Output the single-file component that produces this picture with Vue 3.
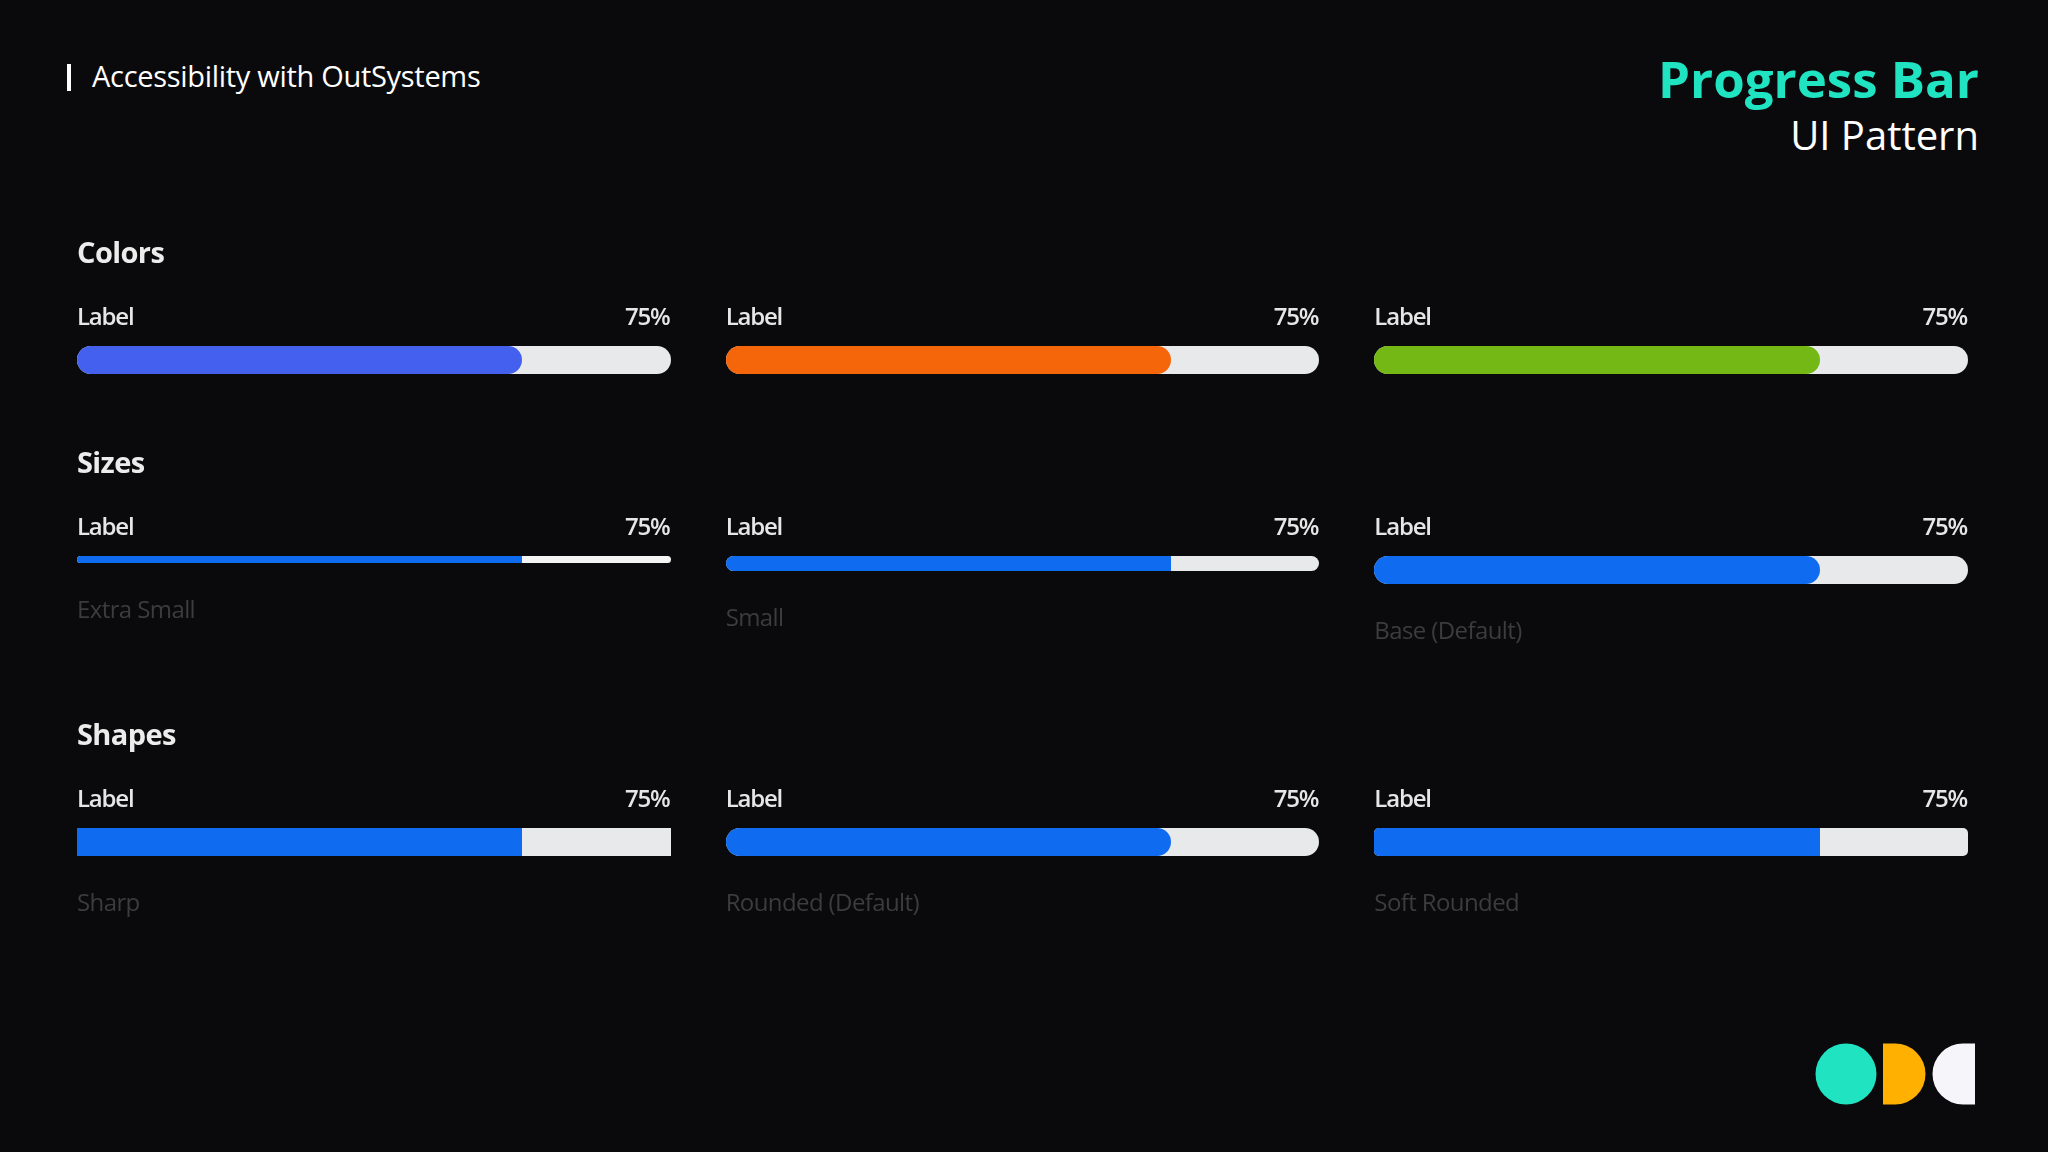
<script setup>
const colorRows = [
  { color: '#4361ee' },
  { color: '#f5650a' },
  { color: '#74b816' }
]
const blue = '#0f6cf0'

const sections = [
  { title: 'Colors', name: 'colors', items: colorRows.map((c) => ({ color: c.color, size: 'base', shape: 'rounded' })) },
  {
    title: 'Sizes',
    name: 'sizes',
    items: [
      { color: blue, size: 'xs', shape: 'rounded', caption: 'Extra Small' },
      { color: blue, size: 'sm', shape: 'rounded', caption: 'Small' },
      { color: blue, size: 'base', shape: 'rounded', caption: 'Base (Default)' }
    ]
  },
  {
    title: 'Shapes',
    name: 'shapes',
    items: [
      { color: blue, size: 'base', shape: 'sharp', caption: 'Sharp' },
      { color: blue, size: 'base', shape: 'rounded', caption: 'Rounded (Default)' },
      { color: blue, size: 'base', shape: 'soft', caption: 'Soft Rounded' }
    ]
  }
]
</script>

<template>
  <div class="page">
    <header class="top">
      <div class="crumb">
        <span class="crumb-bar"></span>
        <span>Accessibility with OutSystems</span>
      </div>
      <div class="heading">
        <div class="heading-main">Progress Bar</div>
        <div class="heading-sub">UI Pattern</div>
      </div>
    </header>

    <main class="content">
      <section v-for="s in sections" :key="s.name" class="section" :class="s.name">
        <h2 class="section-title">{{ s.title }}</h2>
        <div class="grid">
          <div v-for="(item, i) in s.items" :key="i" class="item">
            <div class="item-head">
              <span>Label</span>
              <span>75%</span>
            </div>
            <div class="track" :class="[item.size, item.shape]">
              <div class="fill" :style="{ background: item.color }"></div>
            </div>
            <div v-if="item.caption" class="caption">{{ item.caption }}</div>
          </div>
        </div>
      </section>
    </main>

    <footer class="bottom">
      <svg class="logo" width="161" height="62" viewBox="0 0 161 62">
        <circle cx="31" cy="31" r="30.5" fill="#20e3c2" />
        <path d="M68 .5 h12 a30.5 30.5 0 0 1 0 61 h-12 z" fill="#ffb000" />
        <path d="M160 .5 h-12 a30.5 30.5 0 0 0 0 61 h12 z" fill="#f6f5fa" />
      </svg>
    </footer>
  </div>
</template>

<style scoped>
.page {
  width: 2048px;
  height: 1152px;
  background: #0a0a0c;
  overflow: hidden;
  display: flex;
  flex-direction: column;
  font-family: "Open Sans", "Noto Sans", sans-serif;
  color: #fff;
}

.top {
  height: 236px;
  flex: none;
  box-sizing: border-box;
  padding: 48px 69px 0 67px;
  display: flex;
  justify-content: space-between;
  align-items: flex-start;
}

.crumb {
  display: flex;
  align-items: center;
  gap: 21px;
  font-size: 29px;
  line-height: 54px;
  letter-spacing: -0.3px;
  margin-top: 1px;
}

.crumb-bar {
  width: 4px;
  height: 27px;
  background: #fff;
  margin-top: 3px;
}

.heading {
  text-align: right;
}

.heading-main {
  font-size: 51px;
  font-weight: 700;
  line-height: 60px;
  color: #20e3c2;
}

.heading-sub {
  font-size: 40px;
  line-height: 48px;
  margin-top: 3px;
}

.content {
  padding: 0 80px 0 77px;
  filter: blur(0.7px);
}

.section-title {
  margin: 0 0 33px;
  font-size: 29px;
  font-weight: 700;
  line-height: 32px;
  letter-spacing: -0.6px;
  color: #ececec;
}

.colors {
  margin-bottom: 72px;
}

.sizes {
  margin-bottom: 73px;
}

.grid {
  display: grid;
  grid-template-columns: repeat(3, 1fr);
  column-gap: 55px;
  align-items: start;
}

.item-head {
  display: flex;
  justify-content: space-between;
  padding-right: 1px;
  font-size: 24px;
  font-weight: 600;
  line-height: 30px;
  letter-spacing: -1.2px;
  color: #e6e6e6;
  margin-bottom: 15px;
}

.track {
  background: #e8e9eb;
  overflow: hidden;
}

.track.base {
  height: 28px;
}

.track.sm {
  height: 15px;
}

.track.xs {
  height: 7px;
  background: #f4f4f4;
}

.track.rounded {
  border-radius: 14px;
}

.track.soft {
  border-radius: 5px;
}

.fill {
  width: 75%;
  height: 100%;
}

.track.rounded .fill {
  border-radius: 0 14px 14px 0;
}

.track.xs .fill,
.track.sm .fill {
  border-radius: 0;
}

.caption {
  margin-top: 31px;
  font-size: 24px;
  line-height: 30px;
  letter-spacing: -0.6px;
  color: #3c3c3f;
}

.bottom {
  margin-top: auto;
  padding: 0 72px 47px 0;
  display: flex;
  justify-content: flex-end;
}

.logo {
  display: block;
}
</style>

<style>
html, body {
  margin: 0;
  background: #0a0a0c;
}
</style>
